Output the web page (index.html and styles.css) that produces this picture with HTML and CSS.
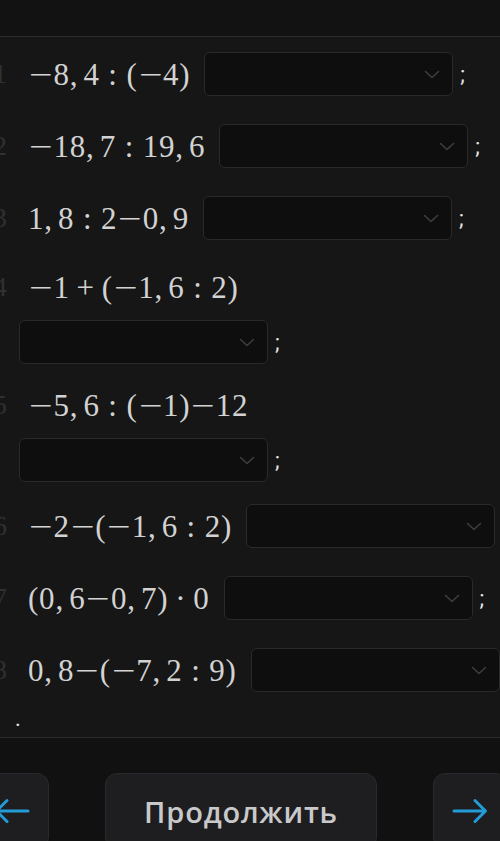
FILE: index.html
```html
<!DOCTYPE html>
<html lang="ru">
<head>
<meta charset="utf-8">
<title>Задание</title>
<link rel="stylesheet" href="styles.css">
</head>
<body>
<div class="page">
  <header class="topbar"></header>
  <main class="list">
    <div class="row">
      <span class="num">1</span>
      <span class="expr"><span class="mi">−</span>8,<i class="th"></i>4<i class="tk"></i>:<i class="tk"></i>(<span class="mi">−</span>4)</span>
      <span class="sel"><svg class="chev" viewBox="0 0 16 9"><path d="M1.5 1.5 L8 7.5 L14.5 1.5"/></svg></span>
      <span class="semi">;</span>
    </div>
    <div class="row">
      <span class="num">2</span>
      <span class="expr"><span class="mi">−</span>18,<i class="th"></i>7<i class="tk"></i>:<i class="tk"></i>19,<i class="th"></i>6</span>
      <span class="sel"><svg class="chev" viewBox="0 0 16 9"><path d="M1.5 1.5 L8 7.5 L14.5 1.5"/></svg></span>
      <span class="semi">;</span>
    </div>
    <div class="row">
      <span class="num">3</span>
      <span class="expr">1,<i class="th"></i>8<i class="tk"></i>:<i class="tk"></i>2<span class="mi">−</span>0,<i class="th"></i>9</span>
      <span class="sel"><svg class="chev" viewBox="0 0 16 9"><path d="M1.5 1.5 L8 7.5 L14.5 1.5"/></svg></span>
      <span class="semi">;</span>
    </div>
    <div class="row wrap">
      <div class="line">
        <span class="num">4</span>
        <span class="expr"><span class="mi">−</span>1<i class="md"></i>+<i class="md"></i>(<span class="mi">−</span>1,<i class="th"></i>6<i class="tk"></i>:<i class="tk"></i>2)</span>
      </div>
      <div class="line sub">
        <span class="sel"><svg class="chev" viewBox="0 0 16 9"><path d="M1.5 1.5 L8 7.5 L14.5 1.5"/></svg></span>
        <span class="semi">;</span>
      </div>
    </div>
    <div class="row wrap">
      <div class="line">
        <span class="num">5</span>
        <span class="expr"><span class="mi">−</span>5,<i class="th"></i>6<i class="tk"></i>:<i class="tk"></i>(<span class="mi">−</span>1)<span class="mi">−</span>12</span>
      </div>
      <div class="line sub">
        <span class="sel"><svg class="chev" viewBox="0 0 16 9"><path d="M1.5 1.5 L8 7.5 L14.5 1.5"/></svg></span>
        <span class="semi">;</span>
      </div>
    </div>
    <div class="row">
      <span class="num">6</span>
      <span class="expr"><span class="mi">−</span>2<span class="mi">−</span>(<span class="mi">−</span>1,<i class="th"></i>6<i class="tk"></i>:<i class="tk"></i>2)</span>
      <span class="sel"><svg class="chev" viewBox="0 0 16 9"><path d="M1.5 1.5 L8 7.5 L14.5 1.5"/></svg></span>
    </div>
    <div class="row">
      <span class="num">7</span>
      <span class="expr">(0,<i class="th"></i>6<span class="mi">−</span>0,<i class="th"></i>7)<i class="md"></i>·<i class="md"></i>0</span>
      <span class="sel"><svg class="chev" viewBox="0 0 16 9"><path d="M1.5 1.5 L8 7.5 L14.5 1.5"/></svg></span>
      <span class="semi">;</span>
    </div>
    <div class="row">
      <span class="num">8</span>
      <span class="expr">0,<i class="th"></i>8<span class="mi">−</span>(<span class="mi">−</span>7,<i class="th"></i>2<i class="tk"></i>:<i class="tk"></i>9)</span>
      <span class="sel"><svg class="chev" viewBox="0 0 16 9"><path d="M1.5 1.5 L8 7.5 L14.5 1.5"/></svg></span>
    </div>
    <div class="dot">.</div>
  </main>
  <footer class="bottom">
    <button class="btn side left" aria-label="Назад">
      <svg class="arrow" viewBox="0 0 36 26"><path d="M34 13 H3 M13 2.5 L2.5 13 L13 23.5"/></svg>
    </button>
    <button class="btn main">Продолжить</button>
    <button class="btn side right" aria-label="Вперёд">
      <svg class="arrow" viewBox="0 0 36 26"><path d="M2 13 H33 M23 2.5 L33.5 13 L23 23.5"/></svg>
    </button>
  </footer>
</div>
</body>
</html>
```

FILE: styles.css
```css
* { box-sizing: border-box; }
html, body { margin: 0; padding: 0; }
body {
  background: #111111;
  width: 500px;
  height: 841px;
  overflow: hidden;
}
.page {
  display: flex;
  flex-direction: column;
  height: 841px;
  overflow: hidden;
}
.topbar {
  height: 37px;
  flex: none;
  background: #121212;
  border-bottom: 1px solid #2b2b2b;
}
.list {
  flex: 1;
  background: #161616;
  padding-top: 15px;
  overflow: hidden;
}
.row {
  display: flex;
  align-items: center;
  height: 44px;
  margin-bottom: 28px;
  white-space: nowrap;
}
.row.wrap {
  display: block;
  height: auto;
  margin-bottom: 22px;
}
.line {
  display: flex;
  align-items: center;
  height: 38px;
}
.line.sub {
  height: 44px;
  margin-top: 14px;
  padding-left: 19px;
}
.num {
  flex: none;
  width: 20px;
  margin-left: -13px;
  margin-right: 21px;
  text-align: right;
  font-family: "Liberation Serif", serif;
  font-size: 28px;
  color: #303030;
}
.expr {
  font-family: "Liberation Serif", serif;
  font-size: 31px;
  line-height: 1;
  letter-spacing: 0.8px;
  color: #d2d2d2;
  white-space: nowrap;
}
.expr i { display: inline-block; }
.expr .th { width: 0.167em; }
.expr .md { width: 0.222em; }
.expr .tk { width: 0.278em; }
.expr .mi {
  display: inline-block;
  width: 0.82em;
  text-align: center;
  letter-spacing: 0;
  transform: scaleX(1.35);
}
.sel {
  flex: none;
  width: 249px;
  height: 44px;
  margin-left: 14px;
  border: 1.5px solid #2a2a2a;
  border-radius: 6px;
  background: #0e0e0e;
  display: flex;
  align-items: center;
  justify-content: flex-end;
  padding-right: 12px;
}
.line.sub .sel { margin-left: 0; }
.chev {
  width: 16px;
  height: 9px;
  fill: none;
  stroke: #3e3e3e;
  stroke-width: 1.6;
  stroke-linecap: round;
  stroke-linejoin: round;
}
.semi {
  font-family: Roboto, "Liberation Sans", sans-serif;
  font-size: 22px;
  color: #e6e6e6;
  margin-left: 7px;
}
.dot {
  font-family: Roboto, "Liberation Sans", sans-serif;
  font-size: 22px;
  color: #e6e6e6;
  padding-left: 15px;
  margin-top: -14px;
}
.bottom {
  flex: none;
  height: 104px;
  background: #111111;
  border-top: 1px solid #2b2b2b;
  display: flex;
  align-items: flex-start;
  gap: 56px;
  padding-top: 35px;
  padding-left: 0;
  margin-left: -25px;
  overflow: visible;
}
.btn {
  flex: none;
  height: 76px;
  background: #1e1e21;
  border: 1px solid #2a2a2e;
  border-radius: 12px;
  padding: 0;
  display: flex;
  align-items: center;
  justify-content: center;
  font-family: "Open Sans", Roboto, sans-serif;
  font-weight: 600;
  font-size: 29px;
  letter-spacing: 0.8px;
  color: #c9c9c9;
}
.btn.side { width: 74px; }
.btn.main { width: 272px; }
.arrow {
  width: 36px;
  height: 26px;
  fill: none;
  stroke: #229bd6;
  stroke-width: 3;
  stroke-linecap: round;
  stroke-linejoin: round;
}
```
